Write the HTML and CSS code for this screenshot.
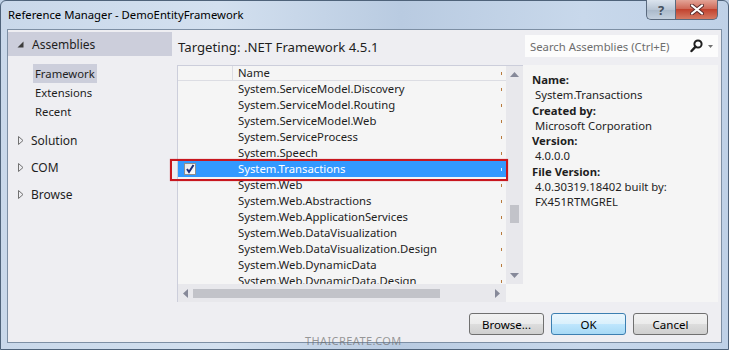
FILE: index.html
```html
<!DOCTYPE html>
<html lang="en">
<head>
    <meta charset="UTF-8">
    <title>Reference Manager - DemoEntityFramework</title>
    <link rel="stylesheet" href="styles.css">
</head>
<body>
    <div class="window">
        <div class="titlebar">
            <span class="title">Reference Manager - DemoEntityFramework</span>
            <div class="caption-buttons">
                <div class="cap help">?</div>
                <div class="cap close">
                    <svg width="14" height="11" viewBox="0 0 14 11">
                        <path d="M2 1.5 L12 9.5 M12 1.5 L2 9.5" stroke="#5a2b2b" stroke-width="4" stroke-linecap="round"/>
                        <path d="M2 1.5 L12 9.5 M12 1.5 L2 9.5" stroke="#ffffff" stroke-width="2.2" stroke-linecap="round"/>
                    </svg>
                </div>
            </div>
        </div>

        <div class="client">
            <div class="main">
                <div class="nav">
                    <div class="nav-head">
                        <svg class="tri" width="7" height="7" viewBox="0 0 7 7"><path d="M6.5 0.5 L6.5 6.5 L0.5 6.5 Z" fill="#3c3c3c"/></svg>
                        <span>Assemblies</span>
                    </div>
                    <div class="nav-items">
                        <div class="nav-item selected">Framework</div>
                        <div class="nav-item">Extensions</div>
                        <div class="nav-item">Recent</div>
                    </div>
                    <div class="nav-group">
                        <svg class="tri" width="6" height="9" viewBox="0 0 6 9"><path d="M0.5 0.5 L5 4.5 L0.5 8.5 Z" fill="none" stroke="#717171"/></svg>
                        <span>Solution</span>
                    </div>
                    <div class="nav-group">
                        <svg class="tri" width="6" height="9" viewBox="0 0 6 9"><path d="M0.5 0.5 L5 4.5 L0.5 8.5 Z" fill="none" stroke="#717171"/></svg>
                        <span>COM</span>
                    </div>
                    <div class="nav-group">
                        <svg class="tri" width="6" height="9" viewBox="0 0 6 9"><path d="M0.5 0.5 L5 4.5 L0.5 8.5 Z" fill="none" stroke="#717171"/></svg>
                        <span>Browse</span>
                    </div>
                </div>

                <div class="center">
                    <div class="targeting">Targeting: .NET Framework 4.5.1</div>
                    <div class="listbox">
                        <div class="list-main">
                            <div class="list-header">
                                <span class="col-check"></span>
                                <span class="col-name">Name</span>
                                <span class="col-more"><i></i></span>
                            </div>
                            <div class="row"><span class="col-check"></span><span class="col-name">System.ServiceModel.Discovery</span><span class="col-more"><i></i></span></div>
                            <div class="row"><span class="col-check"></span><span class="col-name">System.ServiceModel.Routing</span><span class="col-more"><i></i></span></div>
                            <div class="row"><span class="col-check"></span><span class="col-name">System.ServiceModel.Web</span><span class="col-more"><i></i></span></div>
                            <div class="row"><span class="col-check"></span><span class="col-name">System.ServiceProcess</span><span class="col-more"><i></i></span></div>
                            <div class="row"><span class="col-check"></span><span class="col-name">System.Speech</span><span class="col-more"><i></i></span></div>
                            <div class="row selected">
                                <span class="col-check">
                                    <span class="checkbox">
                                        <svg width="10" height="10" viewBox="0 0 10 10"><path d="M2 5 L4 8 L8.5 1" fill="none" stroke="#1b2a78" stroke-width="2"/></svg>
                                    </span>
                                </span>
                                <span class="col-name">System.Transactions</span><span class="col-more"><i></i></span>
                            </div>
                            <div class="row"><span class="col-check"></span><span class="col-name">System.Web</span><span class="col-more"><i></i></span></div>
                            <div class="row"><span class="col-check"></span><span class="col-name">System.Web.Abstractions</span><span class="col-more"><i></i></span></div>
                            <div class="row"><span class="col-check"></span><span class="col-name">System.Web.ApplicationServices</span><span class="col-more"><i></i></span></div>
                            <div class="row"><span class="col-check"></span><span class="col-name">System.Web.DataVisualization</span><span class="col-more"><i></i></span></div>
                            <div class="row"><span class="col-check"></span><span class="col-name">System.Web.DataVisualization.Design</span><span class="col-more"><i></i></span></div>
                            <div class="row"><span class="col-check"></span><span class="col-name">System.Web.DynamicData</span><span class="col-more"><i></i></span></div>
                            <div class="row"><span class="col-check"></span><span class="col-name">System.Web.DynamicData.Design</span><span class="col-more"><i></i></span></div>
                        </div>
                        <div class="vscroll">
                            <div class="sb-btn"><svg width="9" height="5" viewBox="0 0 9 5"><path d="M0 5 L4.5 0 L9 5 Z" fill="#868999"/></svg></div>
                            <div class="vthumb"></div>
                            <div class="sb-btn down"><svg width="9" height="5" viewBox="0 0 9 5"><path d="M0 0 L4.5 5 L9 0 Z" fill="#868999"/></svg></div>
                        </div>
                        <div class="hscroll">
                            <div class="sb-btn left"><svg width="5" height="9" viewBox="0 0 5 9"><path d="M5 0 L0 4.5 L5 9 Z" fill="#868999"/></svg></div>
                            <div class="hthumb"></div>
                            <div class="sb-btn right"><svg width="5" height="9" viewBox="0 0 5 9"><path d="M0 0 L5 4.5 L0 9 Z" fill="#868999"/></svg></div>
                        </div>
                        <div class="corner"></div>
                        <div class="callout"></div>
                    </div>
                </div>

                <div class="side">
                    <div class="search">
                        <span class="search-text">Search Assemblies (Ctrl+E)</span>
                        <svg width="13" height="14" viewBox="0 0 13 14"><circle cx="8" cy="5" r="3.6" fill="none" stroke="#1e1e1e" stroke-width="2"/><path d="M5.6 7.6 L1.5 12" stroke="#1e1e1e" stroke-width="2.4" stroke-linecap="round"/></svg>
                        <svg class="drop" width="5" height="3" viewBox="0 0 5 3"><path d="M0 0 L5 0 L2.5 3 Z" fill="#717171"/></svg>
                    </div>
                    <div class="details">
                        <div class="label">Name:</div>
                        <div class="value">System.Transactions</div>
                        <div class="label">Created by:</div>
                        <div class="value">Microsoft Corporation</div>
                        <div class="label">Version:</div>
                        <div class="value">4.0.0.0</div>
                        <div class="label">File Version:</div>
                        <div class="value">4.0.30319.18402 built by:</div>
                        <div class="value">FX451RTMGREL</div>
                    </div>
                </div>
            </div>

            <div class="footer">
                <button class="btn">Browse...</button>
                <button class="btn default">OK</button>
                <button class="btn">Cancel</button>
            </div>
        </div>

        <div class="watermark">THAICREATE.COM</div>
    </div>
</body>
</html>
```

FILE: styles.css
```css
body {
    margin: 0;
    padding: 0;
    font-family: "Noto Sans", "Open Sans", sans-serif;
    font-size: 11.3px;
    color: #1e1e1e;
    background-color: #bfd1e6;
}
.window {
    position: relative;
    width: 729px;
    height: 350px;
    box-sizing: border-box;
    border: 1px solid #4f637a;
    border-radius: 6px 6px 0 0;
    padding: 0 6px 6px;
    display: flex;
    flex-direction: column;
    background: linear-gradient(90deg, #c9d8ea 0%, #d3e0ef 30%, #b9cbe1 55%, #c8d8eb 80%, #bfd1e7 100%);
}
.titlebar {
    height: 28px;
    display: flex;
    align-items: flex-start;
}
.title {
    margin-top: 6px;
    padding-left: 1px;
    line-height: 16px;
    color: #000000;
}
.caption-buttons {
    margin-left: auto;
    margin-right: 4px;
    margin-top: -1px;
    display: flex;
}
.cap {
    height: 20px;
    box-sizing: border-box;
    border: 1px solid #5a6a7e;
    border-top: none;
    display: flex;
    align-items: center;
    justify-content: center;
}
.help {
    width: 29px;
    border-radius: 0 0 0 5px;
    border-right: none;
    background: linear-gradient(#dbe4ee, #b9c6d5 50%, #a9b8c9 51%, #c3d0de);
    font-weight: bold;
    font-size: 13px;
    color: #44505e;
}
.close {
    width: 43px;
    border-radius: 0 0 5px 0;
    background: linear-gradient(#e3a497, #cf6a59 45%, #c2432f 50%, #d57a63);
}
.client {
    flex: 1;
    border: 1px solid #7d8fa4;
    background-color: #eeeef2;
    display: flex;
    flex-direction: column;
}
.main {
    height: 275px;
    display: flex;
}

/* left navigation */
.nav {
    width: 164px;
}
.nav-head {
    margin-top: 2px;
    height: 24px;
    background-color: #cccedb;
    display: flex;
    align-items: center;
    padding-left: 9px;
    font-size: 12px;
}
.nav-head .tri {
    margin-right: 8px;
}
.nav-items {
    margin-top: 8px;
}
.nav-item {
    margin-left: 25px;
    padding: 0 2px;
    height: 19px;
    line-height: 19px;
    width: fit-content;
}
.nav-item.selected {
    background-color: #cccedb;
}
.nav-group {
    height: 27px;
    display: flex;
    align-items: center;
    padding-left: 10px;
    font-size: 12px;
}
.nav-items + .nav-group {
    margin-top: 6px;
}
.nav-group .tri {
    margin-right: 7px;
}

/* center list */
.center {
    width: 351px;
    padding-left: 5px;
    box-sizing: border-box;
}
.targeting {
    height: 35px;
    box-sizing: border-box;
    padding: 8px 0 0 1px;
    line-height: 18px;
    font-size: 13.2px;
}
.listbox {
    position: relative;
    width: 346px;
    height: 237px;
    box-sizing: border-box;
    border-top: 1px solid #cccedb;
    border-left: 1px solid #cccedb;
    display: grid;
    grid-template-columns: 328px 17px;
    grid-template-rows: 218px 18px;
    background-color: #f5f5f5;
}
.list-main {
    overflow: hidden;
}
.list-header, .row {
    display: flex;
    height: 16px;
    line-height: 16px;
}
.list-header {
    height: 14px;
    line-height: 14px;
    border-bottom: 1px solid #dcdde3;
}
.list-header .col-check {
    border-right: 1px solid #dcdde3;
    width: 54px;
}
.col-check {
    width: 55px;
    flex-shrink: 0;
    display: flex;
    align-items: center;
}
.col-name {
    flex: 1;
    padding-left: 5px;
    white-space: nowrap;
    overflow: hidden;
}
.col-more {
    width: 6px;
    flex-shrink: 0;
    display: flex;
    align-items: center;
}
.col-more i {
    display: block;
    width: 1px;
    height: 3px;
    margin-left: 1px;
    background-color: #b87a3c;
}
.row.selected {
    background-color: #3399ff;
    color: #ffffff;
}
.row.selected .col-more i {
    background-color: #dfeeff;
}
.checkbox {
    margin-left: 6px;
    width: 12px;
    height: 12px;
    box-sizing: border-box;
    border: 1px solid #8e8f8f;
    background: linear-gradient(135deg, #e6e6e6, #ffffff);
    display: flex;
    align-items: center;
    justify-content: center;
}
.vscroll {
    background-color: #e8e8ec;
    display: flex;
    flex-direction: column;
    align-items: center;
}
.sb-btn {
    width: 17px;
    height: 17px;
    display: flex;
    align-items: center;
    justify-content: center;
    flex-shrink: 0;
}
.vthumb {
    margin-top: 122px;
    width: 9px;
    height: 18px;
    background-color: #c2c3c9;
}
.sb-btn.down {
    margin-top: auto;
}
.hscroll {
    background-color: #e8e8ec;
    display: flex;
    align-items: center;
}
.sb-btn.left {
    width: 15px;
    height: 18px;
}
.hthumb {
    width: 247px;
    height: 9px;
    background-color: #c2c3c9;
}
.sb-btn.right {
    margin-left: auto;
    height: 18px;
}
.corner {
    background-color: #f5f5f5;
}
.callout {
    position: absolute;
    left: -8px;
    top: 93px;
    width: 338px;
    height: 22px;
    box-sizing: border-box;
    border: 2px solid #c8171e;
    box-shadow: 0 0 1px rgba(200, 20, 30, 0.6);
}

/* right side */
.side {
    flex: 1;
}
.search {
    margin: 5px 3px 0 2px;
    height: 22px;
    background-color: #fcfcfc;
    display: flex;
    align-items: center;
    padding: 0 5px;
    color: #6d6d6d;
}
.search-text {
    flex: 1;
}
.search .drop {
    margin-left: 5px;
}
.details {
    margin-top: 8px;
    margin-right: 3px;
    height: 237px;
    box-sizing: border-box;
    padding: 7px 0 0 9px;
    background-color: #f5f5f5;
    line-height: 15.25px;
}
.label {
    font-weight: bold;
}
.value {
    padding-left: 3px;
}

/* footer */
.footer {
    flex: 1;
    display: flex;
    justify-content: flex-end;
    gap: 7px;
    padding: 8px 13px 0 0;
}
.btn {
    width: 75px;
    height: 22px;
    font-family: "Noto Sans", "Open Sans", sans-serif;
    font-size: 11.5px;
    color: #000000;
    border: 1px solid #707070;
    border-radius: 3px;
    background: linear-gradient(#f2f2f2, #ebebeb 50%, #dddddd 51%, #cfcfcf);
    padding: 0;
}
.btn.default {
    border-color: #3c7fb1;
    background: linear-gradient(#eaf6fd, #d9f0fc 50%, #bee6fd 51%, #a7d9f5);
}
.watermark {
    position: absolute;
    left: 304px;
    top: 333px;
    font-size: 11px;
    line-height: 13px;
    letter-spacing: 0.4px;
    color: rgba(110, 110, 110, 0.7);
}
```
